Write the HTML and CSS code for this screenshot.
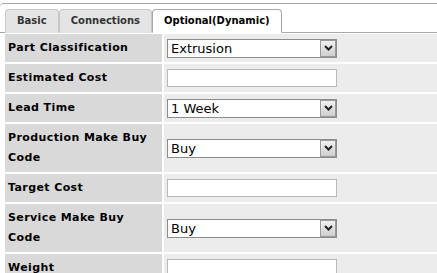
FILE: index.html
```html
<!DOCTYPE html>
<html lang="en">

<head>
  <meta charset="UTF-8">
  <title>Part Attributes</title>
  <link rel="stylesheet" href="styles.css">
</head>

<body>

  <div class="panel">

    <div class="tabs">
      <div class="tab">Basic</div>
      <div class="tab">Connections</div>
      <div class="tab active">Optional(Dynamic)</div>
    </div>

    <table class="form">
      <tr>
        <td class="label">Part Classification</td>
        <td class="value">
          <div class="select">
            <select><option>Extrusion</option></select>
            <span class="arrow"><svg width="9" height="6" viewBox="0 0 9 6"><path d="M1 1 L4.5 4.5 L8 1" fill="none" stroke="#222" stroke-width="2"/></svg></span>
          </div>
        </td>
      </tr>
      <tr>
        <td class="label">Estimated Cost</td>
        <td class="value"><input type="text"></td>
      </tr>
      <tr>
        <td class="label">Lead Time</td>
        <td class="value">
          <div class="select">
            <select><option>1 Week</option></select>
            <span class="arrow"><svg width="9" height="6" viewBox="0 0 9 6"><path d="M1 1 L4.5 4.5 L8 1" fill="none" stroke="#222" stroke-width="2"/></svg></span>
          </div>
        </td>
      </tr>
      <tr>
        <td class="label">Production Make Buy Code</td>
        <td class="value">
          <div class="select">
            <select><option>Buy</option></select>
            <span class="arrow"><svg width="9" height="6" viewBox="0 0 9 6"><path d="M1 1 L4.5 4.5 L8 1" fill="none" stroke="#222" stroke-width="2"/></svg></span>
          </div>
        </td>
      </tr>
      <tr>
        <td class="label">Target Cost</td>
        <td class="value"><input type="text"></td>
      </tr>
      <tr>
        <td class="label">Service Make Buy Code</td>
        <td class="value">
          <div class="select">
            <select><option>Buy</option></select>
            <span class="arrow"><svg width="9" height="6" viewBox="0 0 9 6"><path d="M1 1 L4.5 4.5 L8 1" fill="none" stroke="#222" stroke-width="2"/></svg></span>
          </div>
        </td>
      </tr>
      <tr>
        <td class="label">Weight</td>
        <td class="value"><input type="text"></td>
      </tr>
    </table>

  </div>

</body>

</html>
```

FILE: styles.css
```css
body {
  margin: 0;
  font-family: "DejaVu Sans", Verdana, sans-serif;
  background-color: #fff;
  color: #000;
  overflow: hidden;
}

.panel {
  margin-top: 3px;
  border-top: 1px solid #a8a8a8;
  border-top-left-radius: 4px;
}

.tabs {
  display: flex;
  padding: 5px 0 0 5px;
  border-bottom: 1px solid #a8a8a8;
}

.tab {
  height: 22px;
  line-height: 22px;
  padding: 0 11px;
  margin-bottom: -1px;
  font-size: 10px;
  font-weight: bold;
  color: #333;
  background-color: #e4e4e4;
  border: 1px solid #c8c8c8;
  border-bottom: 1px solid #e4e4e4;
  border-radius: 4px 4px 0 0;
}

.tab.active {
  color: #000;
  background-color: #fff;
  border-color: #a8a8a8;
  border-bottom-color: #fff;
}

.form {
  table-layout: fixed;
  border-collapse: separate;
  border-spacing: 2px;
  margin: -1px 0 0 3px;
  width: 440px;
}

.label {
  width: 150px;
  padding: 4px 4px 4px 3px;
  background-color: #d9d9d9;
  font-size: 11px;
  font-weight: bold;
  letter-spacing: 0.4px;
  line-height: 20px;
  vertical-align: middle;
}

.value {
  padding: 0 0 0 3px;
  background-color: #ececec;
  vertical-align: middle;
}

input {
  display: block;
  width: 170px;
  height: 18px;
  box-sizing: border-box;
  border: 1px solid #b8b8b8;
  background-color: #fff;
  margin: 0;
  padding: 0 3px;
}

.select {
  position: relative;
  width: 170px;
  height: 19px;
}

.select select {
  appearance: none;
  display: block;
  width: 100%;
  height: 100%;
  box-sizing: border-box;
  border: 1px solid #8c8c8c;
  border-radius: 0;
  background-color: #fff;
  font-family: "DejaVu Sans", Verdana, sans-serif;
  font-size: 13px;
  color: #000;
  padding: 0 0 0 3px;
  margin: 0;
}

.arrow {
  position: absolute;
  top: 1px;
  right: 1px;
  width: 16px;
  height: 17px;
  box-sizing: border-box;
  border: 1px solid #9a9a9a;
  background: linear-gradient(#f0f0f0, #cfcfcf);
  display: flex;
  align-items: center;
  justify-content: center;
}
```
